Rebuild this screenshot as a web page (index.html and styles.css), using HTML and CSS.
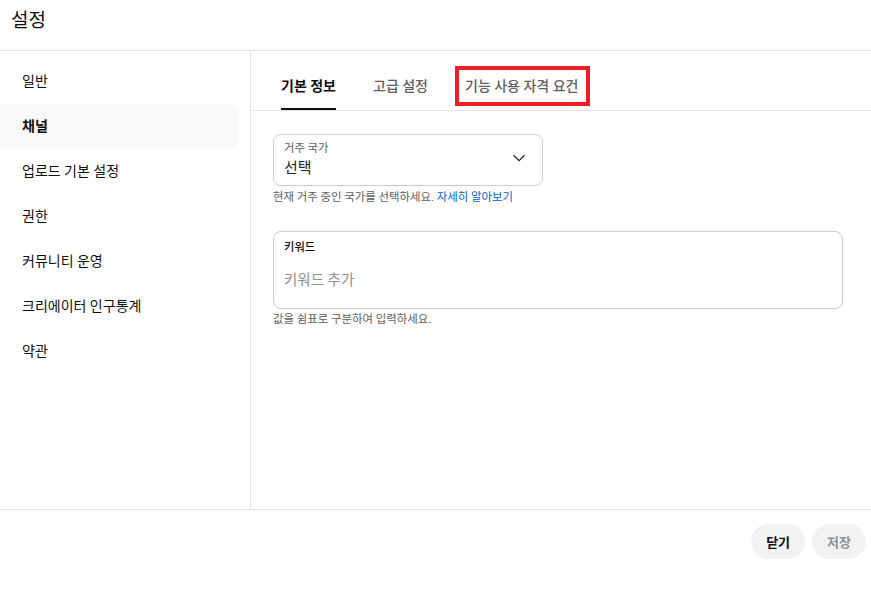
FILE: index.html
```html
<!DOCTYPE html>
<html lang="ko">
<head>
<meta charset="utf-8">
<title>설정</title>
<link rel="stylesheet" href="styles.css">
</head>
<body>
<div class="dialog">
  <header class="header"><h1 class="title">설정</h1></header>
  <div class="body">
    <nav class="sidebar">
      <div class="nav-item">일반</div>
      <div class="nav-item active">채널</div>
      <div class="nav-item">업로드 기본 설정</div>
      <div class="nav-item">권한</div>
      <div class="nav-item">커뮤니티 운영</div>
      <div class="nav-item">크리에이터 인구통계</div>
      <div class="nav-item">약관</div>
    </nav>
    <main class="content">
      <div class="tabs">
        <div class="tab selected">기본 정보</div>
        <div class="tab">고급 설정</div>
        <div class="tab highlighted">기능 사용 자격 요건<span class="mark"></span></div>
      </div>
      <div class="form">
        <div class="field">
          <div class="select">
            <div class="select-text">
              <div class="field-label">거주 국가</div>
              <div class="select-value">선택</div>
            </div>
            <svg class="chevron" width="14" height="8" viewBox="0 0 14 8"><path d="M1.5 1.2 L7 6.6 L12.5 1.2" fill="none" stroke="#1f1f1f" stroke-width="1.2"/></svg>
          </div>
          <div class="helper">현재 거주 중인 국가를 선택하세요. <a class="link">자세히 알아보기</a></div>
        </div>
        <div class="field">
          <div class="textbox">
            <div class="field-label strong">키워드</div>
            <div class="placeholder">키워드 추가</div>
          </div>
          <div class="helper tight">값을 쉼표로 구분하여 입력하세요.</div>
        </div>
      </div>
    </main>
  </div>
  <footer class="footer">
    <button class="btn">닫기</button>
    <button class="btn disabled">저장</button>
  </footer>
</div>
</body>
</html>
```
FILE: styles.css
```css
* { box-sizing: border-box; }
html, body { margin: 0; padding: 0; background: #fff; }
body {
  font-family: Roboto, "Noto Sans CJK KR", sans-serif;
  color: #0f0f0f;
  width: 871px;
  height: 600px;
  overflow: hidden;
}
.dialog { display: flex; flex-direction: column; height: 600px; }
.header {
  height: 51px;
  border-bottom: 1px solid #e5e5e5;
  display: flex;
  align-items: center;
  padding-left: 11px;
}
.title { margin: 0; font-size: 19px; font-weight: 400; line-height: 28px; margin-top: -9px; }
.body { display: flex; height: 459px; border-bottom: 1px solid #e5e5e5; }
.sidebar {
  width: 251px;
  border-right: 1px solid #e5e5e5;
  padding-top: 8px;
  padding-right: 12px;
  display: flex;
  flex-direction: column;
}
.nav-item {
  height: 45px;
  display: flex;
  align-items: center;
  padding-left: 22px;
  padding-bottom: 3px;
  font-size: 14px;
  border-radius: 0 8px 8px 0;
}
.nav-item.active { background: #f9f9f9; font-weight: 700; }
.content { flex: 1; display: flex; flex-direction: column; }
.tabs {
  height: 60px;
  border-bottom: 1px solid #e5e5e5;
  display: flex;
  padding-left: 30px;
  gap: 37px;
}
.tab {
  position: relative;
  display: flex;
  align-items: center;
  padding-top: 11px;
  font-size: 14px;
  font-weight: 500;
  color: #606060;
  border-bottom: 2px solid transparent;
}
.tab.selected { color: #0f0f0f; font-weight: 700; border-bottom-color: #0f0f0f; }
.mark {
  position: absolute;
  left: -10px;
  right: -12px;
  top: 15px;
  bottom: 2px;
  border: 4px solid #ee1d25;
}
.form { padding: 23px 0 0 22px; display: flex; flex-direction: column; gap: 26px; }
.field { display: flex; flex-direction: column; }
.select {
  width: 270px;
  height: 52px;
  border: 1px solid #cccccc;
  border-radius: 8px;
  display: flex;
  align-items: center;
  padding: 0 16px 0 10px;
}
.select-text { flex: 1; display: flex; flex-direction: column; }
.field-label { font-size: 11.3px; color: #606060; line-height: 16px; }
.field-label.strong { color: #0f0f0f; font-weight: 500; }
.select-value { font-size: 15px; line-height: 22px; color: #282828; }
.chevron { display: block; margin-top: -4px; }
.helper { font-size: 11.4px; color: #606060; line-height: 16px; margin-top: 3px; }
.helper.tight { margin-top: 2px; }
.link { color: #065fd4; text-decoration: none; }
.textbox {
  width: 570px;
  height: 78px;
  border: 1px solid #cccccc;
  border-radius: 8px;
  padding: 8px 10px;
}
.placeholder { font-size: 14.5px; color: #909090; line-height: 22px; margin-top: 14px; }
.footer {
  display: flex;
  justify-content: flex-end;
  gap: 7px;
  padding: 14px 5px 0 0;
}
.btn {
  font-family: inherit;
  height: 35px;
  padding: 0 15px;
  border: none;
  border-radius: 18px;
  background: #f2f2f2;
  color: #0f0f0f;
  font-size: 13px;
  font-weight: 700;
}
.btn.disabled { color: #909090; }
```
